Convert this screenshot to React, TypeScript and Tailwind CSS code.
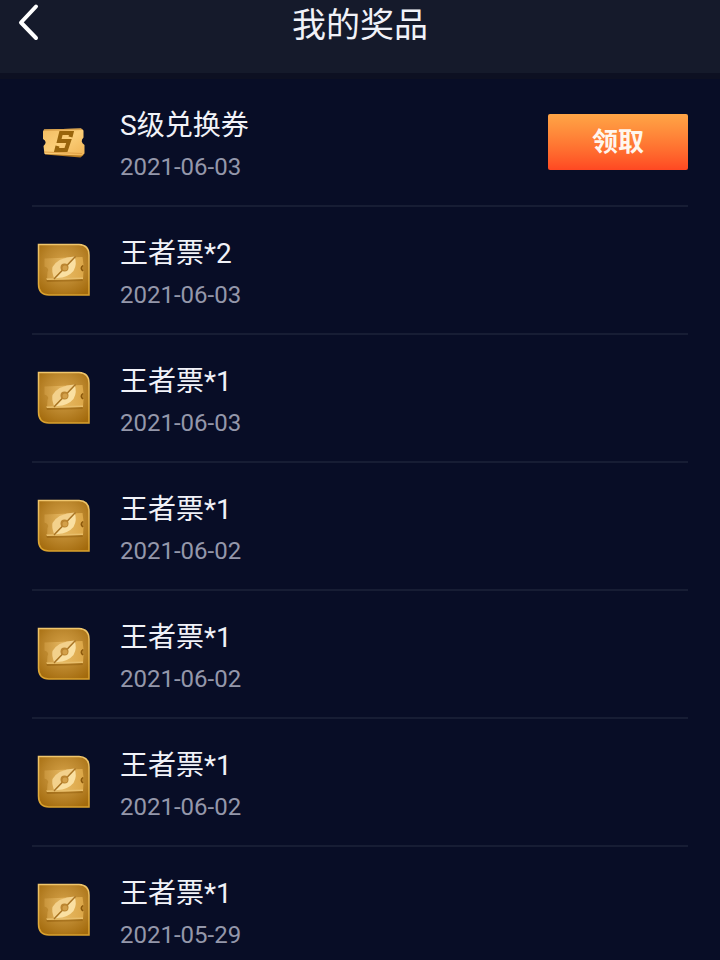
type Prize = {
  id: number;
  name: string;
  date: string;
  kind: "exchange" | "king";
  claimable?: boolean;
};

const prizes: Prize[] = [
  { id: 1, name: "S级兑换券", date: "2021-06-03", kind: "exchange", claimable: true },
  { id: 2, name: "王者票*2", date: "2021-06-03", kind: "king" },
  { id: 3, name: "王者票*1", date: "2021-06-03", kind: "king" },
  { id: 4, name: "王者票*1", date: "2021-06-02", kind: "king" },
  { id: 5, name: "王者票*1", date: "2021-06-02", kind: "king" },
  { id: 6, name: "王者票*1", date: "2021-06-02", kind: "king" },
  { id: 7, name: "王者票*1", date: "2021-05-29", kind: "king" },
];

// Gradients shared by all the prize icons
function IconDefs() {
  return (
    <svg className="absolute h-0 w-0" aria-hidden="true">
      <defs>
        <linearGradient id="ticket" x1="0" y1="0" x2="1" y2="1">
          <stop offset="0" stopColor="#f3bd62" />
          <stop offset="0.5" stopColor="#fbce78" />
          <stop offset="1" stopColor="#f0b455" />
        </linearGradient>
        <radialGradient id="tile" cx="0.5" cy="0.4" r="0.7">
          <stop offset="0" stopColor="#d6a248" />
          <stop offset="0.55" stopColor="#bb862c" />
          <stop offset="1" stopColor="#a36a0c" />
        </radialGradient>
        <linearGradient id="tileTicket" x1="0" y1="0" x2="1" y2="0">
          <stop offset="0" stopColor="#c9953c" />
          <stop offset="0.5" stopColor="#e6b862" />
          <stop offset="1" stopColor="#dca748" />
        </linearGradient>
        <linearGradient id="tileEdge" x1="0" y1="0" x2="0" y2="1">
          <stop offset="0" stopColor="#f0c66c" />
          <stop offset="1" stopColor="#d9a02c" />
        </linearGradient>
      </defs>
    </svg>
  );
}

function ExchangeIcon() {
  return (
    <svg viewBox="0 0 64 64" className="h-16 w-16 shrink-0" aria-hidden="true">
      <path d="M13 42 L13 44.500 L48.500 47.500 L51.500 45 L51 41 Z" fill="#b57a22" />
      <path
        d="M12 19.500 L49 18.500 L51.500 20.500 V27.500 Q47.500 31.500 52.500 35 V43.500 L50 45.500 L12.500 44 L11.500 36 Q16 32 11 29 V21.500 Z"
        fill="url(#ticket)"
      />
      <path d="M12 19.500 L49 18.500 L51 20 L12 21 Z" fill="#dba24b" />
      <path d="M12 42 L50 43.500" stroke="#e0a045" strokeWidth="1" />
      <path
        d="M38.500 27 L39.500 23 H29 L27 31 H37 L34 40 H24.500 L25.500 36"
        fill="none"
        stroke="#99650c"
        strokeWidth="4"
      />
    </svg>
  );
}

function KingTicketIcon() {
  return (
    <svg viewBox="0 0 64 64" className="h-16 w-16 shrink-0" aria-hidden="true">
      <path
        d="M6.500 6.500 H47 Q57 7 57 17 V57 H17 Q6.500 57 6.500 46 Z"
        fill="url(#tile)"
        stroke="url(#tileEdge)"
        strokeWidth="1.500"
      />
      <path d="M14 41.500 L50 41 L51 43 L15 44 Z" fill="#8f5c0c" opacity="0.5" />
      <path
        d="M12.500 20.500 L50.500 19 L51.500 27 Q47 30 51.500 33 L51 41 L15 42 L15.500 34 Q18 30.500 12.500 28.500 Z"
        fill="url(#tileTicket)"
      />
      <path d="M51 27.500 Q47.500 30 51 33" stroke="#8a570b" strokeWidth="1.500" fill="none" />
      <path d="M14 40.500 L51 39.500 L51 41 L15 42 Z" fill="#e8be6b" />
      <path d="M42.500 18.500 Q26 19.500 20.500 29 Q19.500 33 22 40 Z" fill="#f3d18c" />
      <path d="M42.500 18.500 Q45.500 26 41.500 33 Q36 39.500 25.500 40 L22.500 40.500 Z" fill="#fae0a2" />
      <path d="M43.500 18.500 L22 41" stroke="#a87324" strokeWidth="1.400" />
      <circle cx="32.500" cy="29.500" r="4" fill="#bb8531" />
      <circle cx="33" cy="30" r="2.500" fill="#d3a04a" />
    </svg>
  );
}

function PrizeRow({ prize }: { prize: Prize }) {
  return (
    <li className="flex h-32 items-center border-b-2 border-[#171d34]">
      {prize.kind === "exchange" ? <ExchangeIcon /> : <KingTicketIcon />}
      <div className="ml-6 flex-1 pt-1.5">
        <h2 className="text-[28px] leading-[44px] text-[#f1f2f8]">{prize.name}</h2>
        <p className="text-2xl leading-[38px] text-[#9497aa]">{prize.date}</p>
      </div>
      {prize.claimable && (
        <button
          type="button"
          className="h-14 w-[140px] rounded-xs bg-linear-to-b from-[#ffa546] to-[#ff4722] text-[26px] font-bold text-[#fff6ee]"
        >
          领取
        </button>
      )}
    </li>
  );
}

export default function App() {
  return (
    <div className="flex h-screen flex-col bg-[#080d26] font-['Roboto','Noto_Sans_CJK_SC',sans-serif]">
      <IconDefs />
      <header className="grid h-[79px] shrink-0 grid-cols-[1fr_auto_1fr] items-start border-b-[6px] border-[#0d1022] bg-[#151a2b] px-4">
        <button type="button" aria-label="返回" className="h-12 w-6 text-white">
          <svg viewBox="0 0 24 48" fill="none" className="h-12 w-6">
            <path
              d="M20 6.500 L5 22.500 L20 38"
              stroke="currentColor"
              strokeWidth="4"
              strokeLinecap="round"
              strokeLinejoin="round"
            />
          </svg>
        </button>
        <h1 className="text-[34px] leading-[50px] text-[#f1f2f8]">我的奖品</h1>
      </header>

      {/* Prize list */}
      <main className="flex-1 overflow-y-auto px-8 [scrollbar-width:none]">
        <ul>
          {prizes.map((prize) => (
            <PrizeRow key={prize.id} prize={prize} />
          ))}
        </ul>
      </main>
    </div>
  );
}
